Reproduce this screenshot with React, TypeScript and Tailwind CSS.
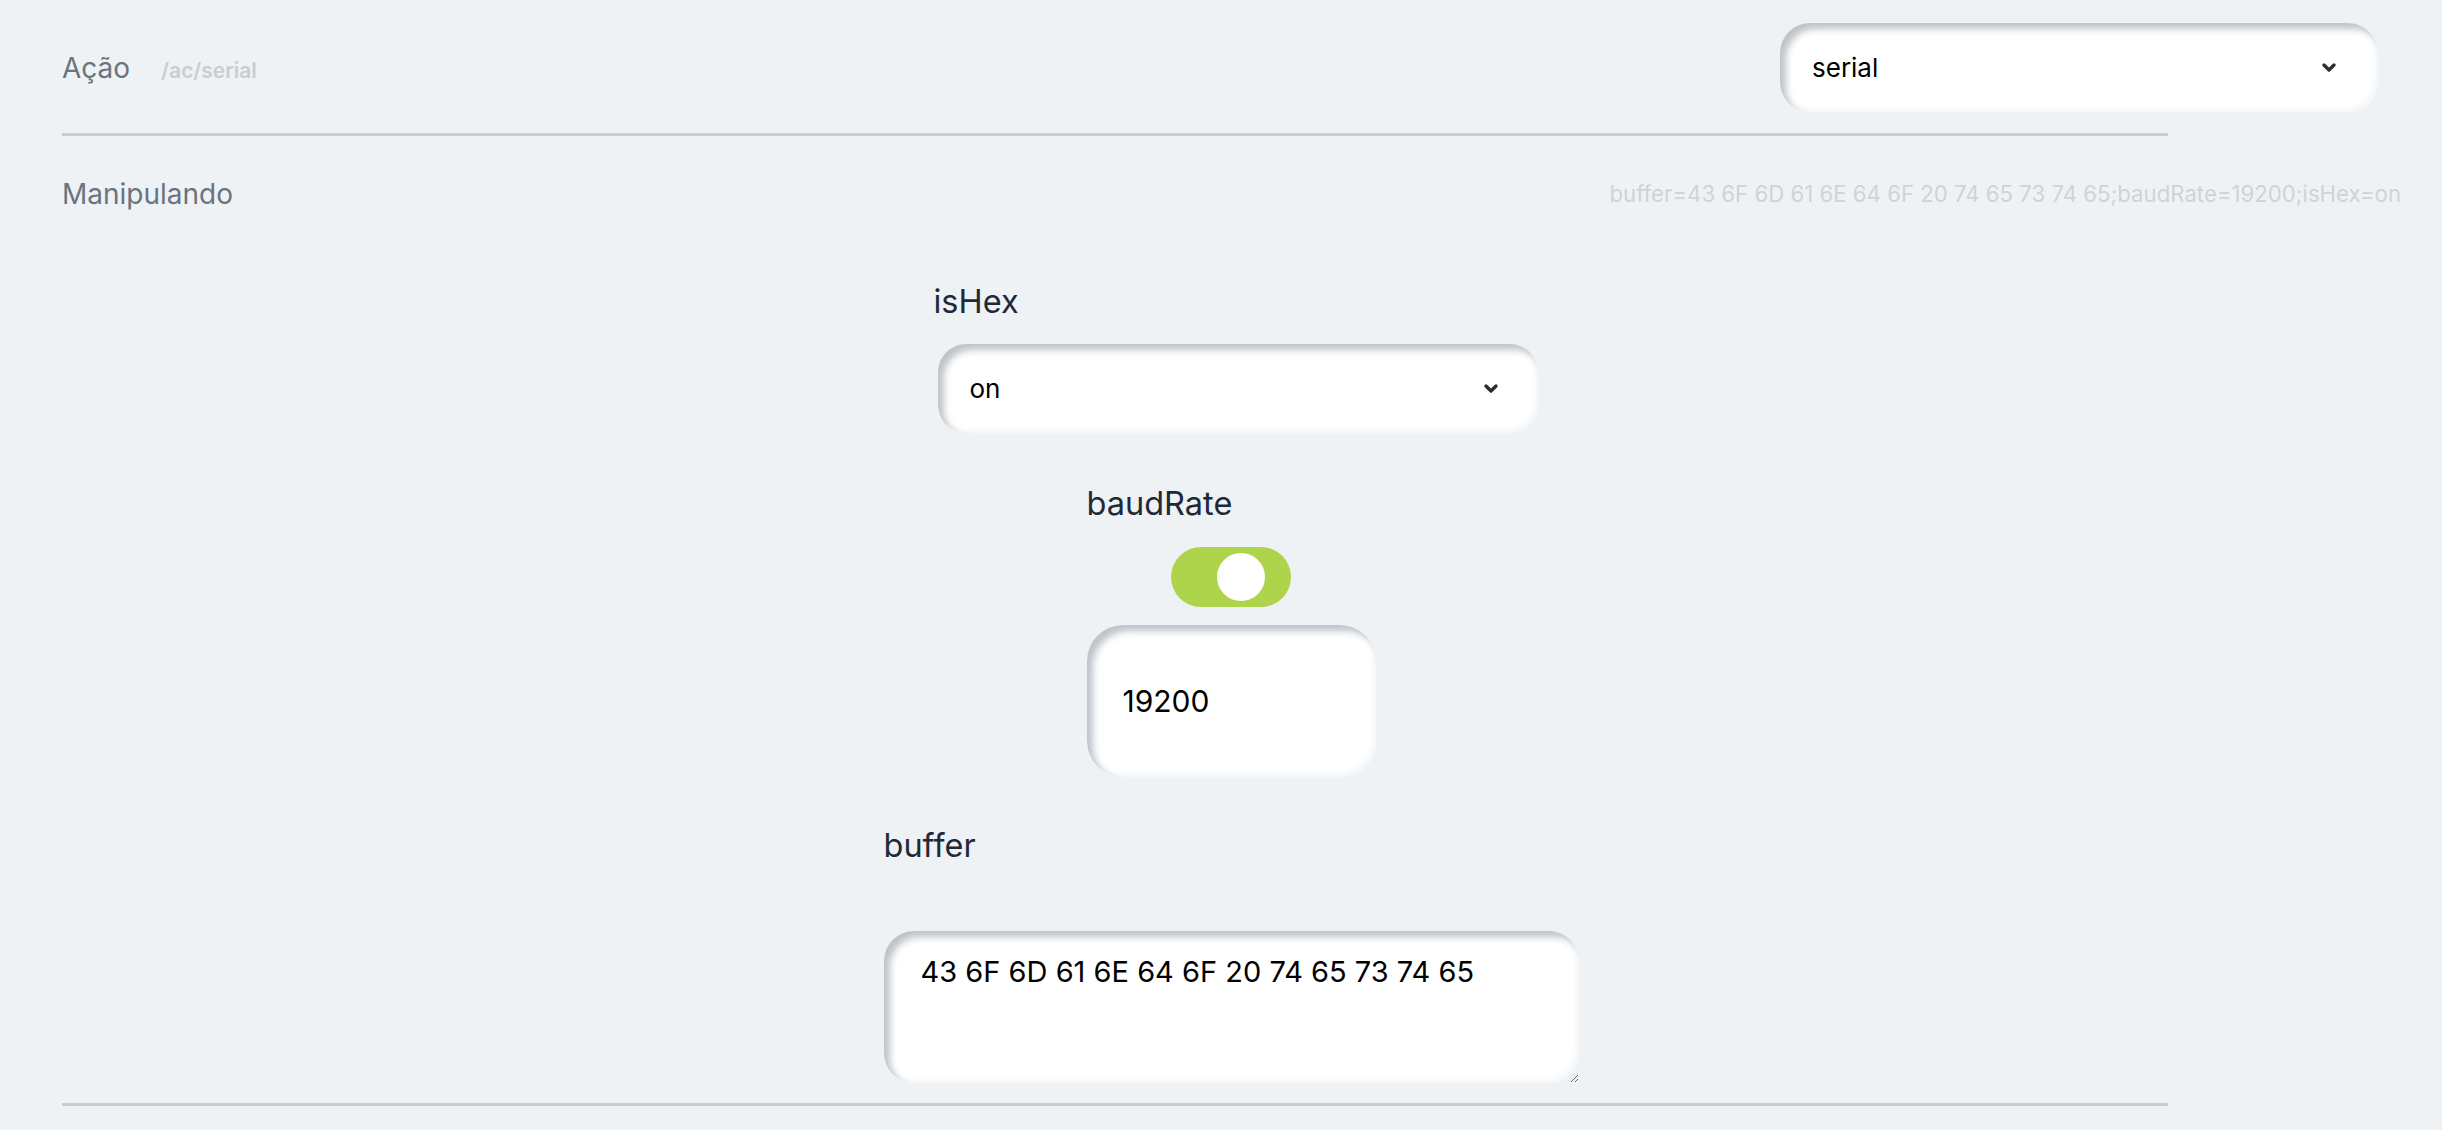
import React from "react";

function Chevron() {
  return (
    <svg width="16" height="11" viewBox="0 0 16 11" className="shrink-0">
      <polyline points="3,3 8,8 13,3" fill="none" stroke="#2a2d33" strokeWidth="3.4" strokeLinecap="round" strokeLinejoin="round" />
    </svg>
  );
}

const well =
  "bg-white shadow-[inset_6px_6px_7px_#bfc3c8,inset_-3px_-3px_6px_#f4f6f8]";

export default function App() {
  return (
    <div
      className="min-h-screen bg-[#eef2f5] pl-[62px] pr-[64px] pt-[23px] pb-10"
      style={{ fontFamily: "Inter, 'Noto Sans', sans-serif" }}
    >
      {/* Header */}
      <div className="flex items-center justify-between">
        <div className="flex items-baseline gap-[31px]">
          <span className="text-[28px] leading-[40px] text-[#6b7280]">Ação</span>
          <span className="text-[21px] font-semibold text-[#c9cdd3]">/ac/serial</span>
        </div>
        <div className={`flex h-[89px] w-[598px] items-center justify-between rounded-[30px] pl-[32px] pr-[41px] ${well}`}>
          <span className="text-[26px] text-black">serial</span>
          <Chevron />
        </div>
      </div>

      <div className="mt-[21px] h-[3px] w-[2106px] bg-[#c9cdd2]" />

      {/* Manipulando row */}
      <div className="mr-[-23px] mt-[38px] flex h-[40px] items-center justify-between">
        <span className="text-[28px] text-[#6b7280]">Manipulando</span>
        <span className="text-[22.2px] text-[#cfd3d8]">
          buffer=43 6F 6D 61 6E 64 6F 20 74 65 73 74 65;baudRate=19200;isHex=on
        </span>
      </div>

      {/* Form */}
      <div className="flex flex-col items-center pl-[22px]">
        {/* isHex */}
        <div className="ml-[9px] mt-[68px] flex w-[604px] flex-col">
          <span className="text-[32.5px] leading-[40px] text-[#1f2937]">isHex</span>
          <div className={`ml-[4px] mt-[22px] flex h-[89px] w-[600px] items-center justify-between rounded-[28px] pl-[32px] pr-[39px] ${well}`}>
            <span className="text-[26px] text-black">on</span>
            <Chevron />
          </div>
        </div>

        {/* baudRate */}
        <div className="mt-[51px] flex w-[289px] flex-col">
          <span className="text-[32.5px] leading-[40px] text-[#1f2937]">baudRate</span>
          <div className="mt-[23px] flex justify-center">
            <div className="relative h-[60px] w-[120px] rounded-full bg-[#aed44b]">
              <div className="absolute left-[46px] top-[6px] h-[48px] w-[48px] rounded-full bg-white" />
            </div>
          </div>
          <div className={`mt-[18px] flex h-[152px] w-[289px] items-center rounded-[36px] pl-[36px] ${well}`}>
            <span className="text-[30px] text-black">19200</span>
          </div>
        </div>

        {/* buffer */}
        <div className="mt-[49px] flex w-[695px] flex-col">
          <span className="text-[32.5px] leading-[40px] text-[#1f2937]">buffer</span>
          <textarea
            readOnly
            defaultValue="43 6F 6D 61 6E 64 6F 20 74 65 73 74 65"
            className={`mt-[65px] h-[152px] w-[695px] resize rounded-[30px] px-[37px] pt-[22px] text-[29px] leading-[38px] text-black outline-none ${well}`}
            style={{ fontFamily: "Inter, 'Noto Sans', sans-serif" }}
          />
        </div>
      </div>

      <div className="mt-[20px] h-[3px] w-[2106px] bg-[#c9cdd2]" />
    </div>
  );
}
